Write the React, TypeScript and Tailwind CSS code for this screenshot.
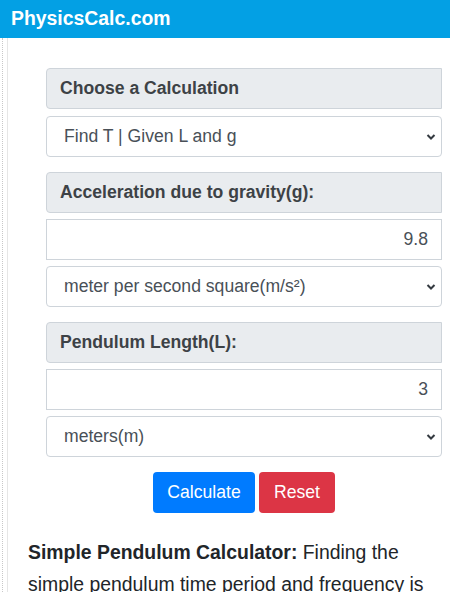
import React from "react";

const font = { fontFamily: '"Liberation Sans", Arial, sans-serif' };

function Label({ children, className = "" }: { children: React.ReactNode; className?: string }) {
  return (
    <div
      className={`h-[41px] flex items-center pl-[13px] bg-[#e9ecef] border border-[#ced4da] rounded-l-[4px] text-[17.6px] font-bold text-[#3d4246] ${className}`}
    >
      {children}
    </div>
  );
}

function Select({ value, className = "" }: { value: string; className?: string }) {
  return (
    <div
      className={`h-[41px] flex items-center justify-between pl-[17px] pr-[5px] bg-white border border-[#ced4da] rounded-[4px] text-[17.6px] text-[#495057] ${className}`}
    >
      <span>{value}</span>
      <svg width="10" height="8" viewBox="0 0 10 8">
        <path d="M1.5 2 L5 5.5 L8.5 2" fill="none" stroke="#343a40" strokeWidth="2" />
      </svg>
    </div>
  );
}

function Input({ value, className = "" }: { value: string; className?: string }) {
  return (
    <div
      className={`h-[41px] flex items-center justify-end pr-[13px] bg-white border border-[#ced4da] text-[17.6px] text-[#495057] ${className}`}
    >
      {value}
    </div>
  );
}

export default function App() {
  return (
    <div className="w-[450px] h-[592px] overflow-hidden bg-white" style={font}>
      <div className="h-[38px] bg-[#03a0e4] flex items-center pl-[11px]">
        <span className="text-white font-bold text-[19.4px]">PhysicsCalc.com</span>
      </div>
      <div className="ml-[2px] border-l border-dotted border-[#c8c8c8] pl-[4px] h-[554px]">
        <div className="border-l border-[#e6e6e6] h-full">
          <div className="ml-[38px] mr-[8px] pt-[30px] flex flex-col">
            <Label>Choose a Calculation</Label>
            <Select value="Find T | Given L and g" className="mt-[7px]" />
            <Label className="mt-[15px]">Acceleration due to gravity(g):</Label>
            <Input value="9.8" className="mt-[6px]" />
            <Select value="meter per second square(m/s²)" className="mt-[6px]" />
            <Label className="mt-[15px]">Pendulum Length(L):</Label>
            <Input value="3" className="mt-[6px]" />
            <Select value="meters(m)" className="mt-[6px]" />
            <div className="mt-[15px] flex justify-center gap-[4px]">
              <button className="h-[41px] w-[102px] rounded-[4px] bg-[#007bff] text-white text-[17.6px]">
                Calculate
              </button>
              <button className="h-[41px] w-[76px] rounded-[4px] bg-[#dc3545] text-white text-[17.6px]">
                Reset
              </button>
            </div>
          </div>
          <p className="ml-[20px] mr-[8px] mt-[23px] text-[19.4px] leading-[32px] text-[#212529]">
            <b>Simple Pendulum Calculator:</b> Finding the simple pendulum time period and frequency is
          </p>
        </div>
      </div>
    </div>
  );
}
